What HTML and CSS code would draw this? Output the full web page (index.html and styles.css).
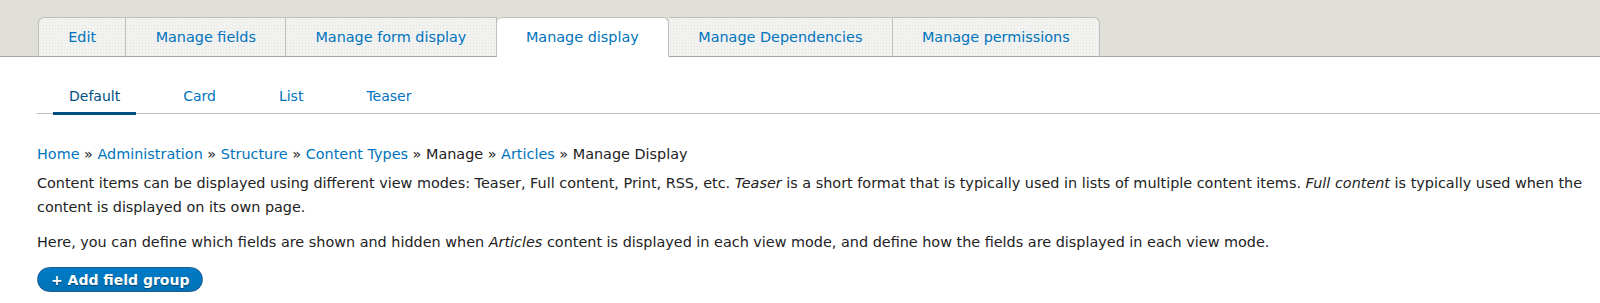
FILE: index.html
```html
<!DOCTYPE html>
<html lang="en">
<head>
    <meta charset="UTF-8">
    <title>Manage display</title>
    <link rel="stylesheet" href="styles.css">
</head>
<body>
    <div class="page-header">
        <ul class="tabs-primary">
            <li class="tab"><a href="#">Edit</a></li>
            <li class="tab"><a href="#">Manage fields</a></li>
            <li class="tab"><a href="#">Manage form display</a></li>
            <li class="tab is-active"><a href="#">Manage display</a></li>
            <li class="tab"><a href="#">Manage Dependencies</a></li>
            <li class="tab"><a href="#">Manage permissions</a></li>
        </ul>
    </div>

    <div class="content">
        <ul class="tabs-secondary">
            <li class="subtab is-active"><a href="#">Default</a></li>
            <li class="subtab"><a href="#">Card</a></li>
            <li class="subtab"><a href="#">List</a></li>
            <li class="subtab"><a href="#">Teaser</a></li>
        </ul>

        <nav class="breadcrumb">
            <a href="#">Home</a> » <a href="#">Administration</a> » <a href="#">Structure</a> » <a href="#">Content Types</a> » Manage » <a href="#">Articles</a> » Manage Display
        </nav>

        <p class="help">Content items can be displayed using different view modes: Teaser, Full content, Print, RSS, etc. <em>Teaser</em> is a short format that is typically used in lists of multiple content items. <em>Full content</em> is typically used when the content is displayed on its own page.</p>
        <p class="help">Here, you can define which fields are shown and hidden when <em>Articles</em> content is displayed in each view mode, and define how the fields are displayed in each view mode.</p>

        <button class="button-primary">+ Add field group</button>
    </div>
</body>
</html>
```

FILE: styles.css
```css
body {
    margin: 0;
    font-family: "DejaVu Sans", "Noto Sans", sans-serif;
    font-size: 14.4px;
    color: #222;
    background-color: #fff;
}

a {
    color: #0074bd;
    text-decoration: none;
}

ul {
    list-style: none;
    margin: 0;
    padding: 0;
}

/* primary tabs */
.page-header {
    background-color: #e0e0d8;
    padding: 17px 0 0 38px;
    border-bottom: 1px solid #a6a6a6;
}

.tabs-primary {
    display: flex;
    margin-bottom: -1px;
}

.tab {
    height: 38px;
    background-color: #f2f2f0;
    background-image: radial-gradient(#e4e4e0 0.6px, transparent 0.8px);
    background-size: 3px 3px;
    border: 1px solid #bfbfba;
    border-left: none;
    border-bottom: 1px solid #a6a6a6;
}

.tab:first-child {
    border-left: 1px solid #bfbfba;
    border-top-left-radius: 6px;
}

.tab:last-child {
    border-top-right-radius: 6px;
}

.tab a {
    display: block;
    padding: 0 29.25px;
    line-height: 38px;
    font-size: 14.4px;
}

.tab.is-active {
    background: #fff;
    border-bottom-color: #fff;
    border-radius: 6px 6px 0 0;
}

/* secondary tabs */
.content {
    padding: 0 0 0 37px;
}

.tabs-secondary {
    display: flex;
    gap: 31px;
    padding: 28px 0 0 16px;
    border-bottom: 1px solid #bfbfba;
}

.subtab a {
    display: block;
    padding: 0 16px 5px;
    font-size: 14px;
    line-height: 22px;
}

.subtab.is-active a {
    color: #004f80;
    border-bottom: 3px solid #004f80;
    margin-bottom: -2px;
}

/* content */
.breadcrumb {
    margin-top: 28px;
    line-height: 24px;
}

.help {
    margin: 5px 0 0;
    line-height: 24px;
}

.help + .help {
    margin-top: 11px;
}

.button-primary {
    margin-top: 13px;
    height: 25px;
    padding: 0 13px;
    font-family: inherit;
    font-size: 14px;
    font-weight: bold;
    color: #fff;
    background: linear-gradient(#007bc6, #0071b8);
    border: 1px solid #1e5c90;
    border-radius: 13px;
    text-shadow: 0 1px 1px rgba(0,0,0,0.4);
}
```
